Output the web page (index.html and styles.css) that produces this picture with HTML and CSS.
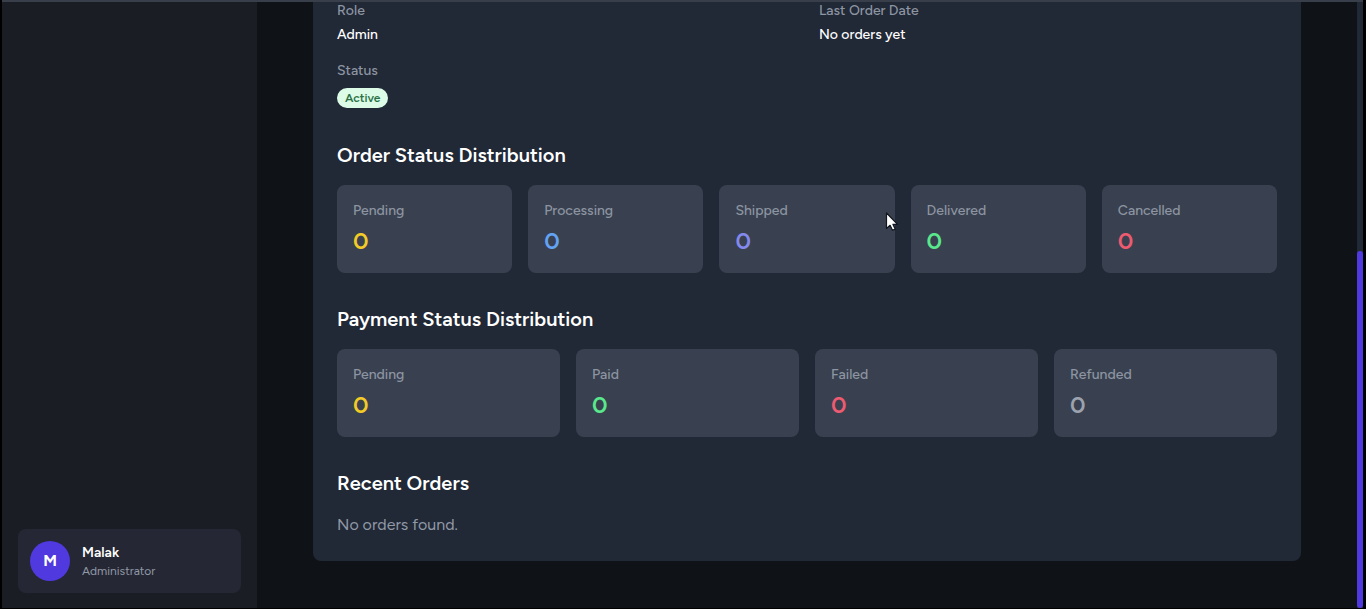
FILE: index.html
```
<!DOCTYPE html>
<html lang="en">
<head>
<meta charset="utf-8">
<meta name="viewport" content="width=device-width, initial-scale=1">
<title>User details</title>
<link rel="stylesheet" href="styles.css">
</head>
<body>
<div class="app">
  <aside class="sidebar">
    <div class="user">
      <span class="avatar">M</span>
      <div>
        <p class="user-name">Malak</p>
        <p class="user-role">Administrator</p>
      </div>
    </div>
  </aside>
  <main class="main">
    <article class="panel">
      <dl class="details">
        <div><dt>Role</dt><dd>Admin</dd></div>
        <div><dt>Last Order Date</dt><dd>No orders yet</dd></div>
        <div><dt>Status</dt><dd class="status"><span class="badge">Active</span></dd></div>
      </dl>
      <section class="section">
        <h2>Order Status Distribution</h2>
        <dl class="stats stats-five">
          <div class="stat yellow"><dt>Pending</dt><dd>0</dd></div>
          <div class="stat blue"><dt>Processing</dt><dd>0</dd></div>
          <div class="stat indigo"><dt>Shipped</dt><dd>0</dd></div>
          <div class="stat green"><dt>Delivered</dt><dd>0</dd></div>
          <div class="stat red"><dt>Cancelled</dt><dd>0</dd></div>
        </dl>
      </section>
      <section class="section">
        <h2>Payment Status Distribution</h2>
        <dl class="stats stats-four">
          <div class="stat yellow"><dt>Pending</dt><dd>0</dd></div>
          <div class="stat green"><dt>Paid</dt><dd>0</dd></div>
          <div class="stat red"><dt>Failed</dt><dd>0</dd></div>
          <div class="stat gray"><dt>Refunded</dt><dd>0</dd></div>
        </dl>
      </section>
      <section class="section">
        <h2>Recent Orders</h2>
        <p class="empty">No orders found.</p>
      </section>
    </article>
  </main>
  <div class="scrollbar"><div class="thumb"></div></div>
</div>
<div class="topline"></div>
<svg class="cursor" width="14" height="22" viewBox="0 0 14 22" aria-hidden="true">
  <path d="M1.500 2V17.500L5.100 14.300L7.500 19.300L10.100 18.100L7.900 13.300H12.500Z" fill="#fff" stroke="#11151d" stroke-width="1.200" stroke-linejoin="round"/>
</svg>
</body>
</html>
```
FILE: styles.css
```
* {
  box-sizing: border-box;
  margin: 0;
}

body {
  background: #000;
  color: #fff;
  font-family: Figtree, Lato, "Liberation Sans", sans-serif;
  font-size: 14px;
  line-height: 20px;
}

.app {
  display: flex;
  min-height: 100vh;
  padding: 0 3px 0 2px;
  background: #0f1217;
  border-bottom: 1px solid #000;
  box-shadow: inset 2px 0 #000, inset -3px 0 #000;
}

.topline {
  position: absolute;
  top: 0;
  left: 2px;
  right: 3px;
  height: 2px;
  background: #393f4a;
}

.sidebar {
  display: flex;
  flex: 0 0 255px;
  flex-direction: column;
  justify-content: flex-end;
  padding: 16px 16px 15px;
  background: #1a1d24;
}

.user {
  display: flex;
  align-items: center;
  gap: 12px;
  padding: 12px;
  border-radius: 8px;
  background: #252734;
}

.avatar {
  display: grid;
  place-items: center;
  width: 40px;
  height: 40px;
  border-radius: 50%;
  background: #5039de;
  font-size: 16px;
  font-weight: 700;
}

.user-name {
  font-weight: 600;
}

.user-role {
  color: #9099a6;
  font-size: 12px;
  line-height: 16px;
}

.main {
  flex: 1;
  padding: 0 56px 47px;
}

.panel {
  padding: 1px 24px 24px;
  border-radius: 0 0 8px 8px;
  background: #212836;
}

.details {
  display: grid;
  grid-template-columns: 1fr 1fr;
  gap: 16px 24px;
}

dt {
  color: #8d95a2;
  font-weight: 500;
}

dd {
  margin-top: 4px;
  font-weight: 500;
}

.status {
  display: flex;
  padding-top: 3px;
  padding-bottom: 1px;
}

.badge {
  padding: 0 8px;
  border-radius: 10px;
  background: #dcfce7;
  color: #2a7146;
  font-size: 12px;
  font-weight: 600;
}

.section {
  padding-top: 32px;
}

h2 {
  margin-bottom: 16px;
  font-size: 20px;
  font-weight: 600;
  line-height: 28px;
}

.stats {
  display: grid;
  gap: 16px;
}

.stats-five {
  grid-template-columns: repeat(5, 1fr);
}

.stats-four {
  grid-template-columns: repeat(4, 1fr);
}

.stat {
  padding: 16px;
  border-radius: 8px;
  background: #394150;
}

.stat dd {
  font-size: 24px;
  font-weight: 600;
  line-height: 32px;
}

.yellow dd { color: #f3cb26; }
.blue dd { color: #64a3f3; }
.indigo dd { color: #8489ee; }
.green dd { color: #5ae88c; }
.red dd { color: #ee5b70; }
.gray dd { color: #9ca3af; }

.empty {
  color: #9099a6;
  font-size: 16px;
  line-height: 24px;
}

.scrollbar {
  display: flex;
  flex: 0 0 6px;
  flex-direction: column;
  justify-content: flex-end;
  background: #212836;
}

.thumb {
  height: 58.7%;
  border-radius: 3px;
  background: #5039de;
}

.cursor {
  position: absolute;
  top: 211px;
  left: 885px;
}
```
